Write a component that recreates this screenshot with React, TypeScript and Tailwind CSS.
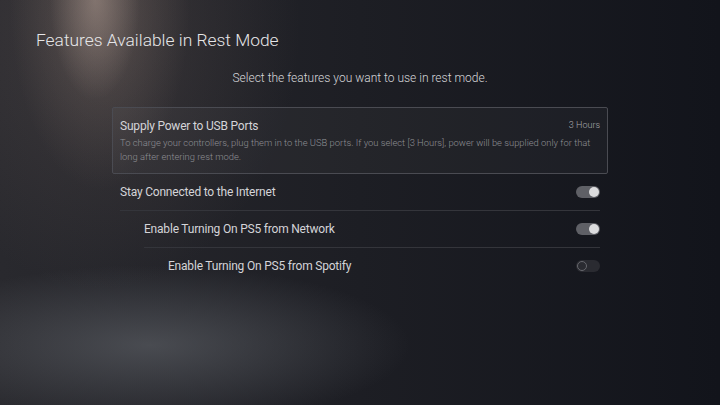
import React from "react";

function Toggle({ on }: { on: boolean }) {
  return on ? (
    <div className="w-[24px] h-[12px] rounded-full bg-[#5f6066] flex items-center justify-end pr-[1px]">
      <div className="w-[10px] h-[10px] rounded-full bg-[#dcdcde]" />
    </div>
  ) : (
    <div className="w-[24px] h-[12px] rounded-full bg-[#2a2b31] flex items-center pl-[1px]">
      <div className="w-[10px] h-[10px] rounded-full border border-[#66676d]" />
    </div>
  );
}

function Row({ label, indent, divider, on }: { label: string; indent: string; divider: boolean; on: boolean }) {
  return (
    <div className={`${indent} ${divider ? "border-b border-[#34353b]" : ""}`}>
      <div className="h-[36px] flex items-center justify-between">
        <span className="text-[12px] tracking-[-0.2px] text-[#d4d4d8]">{label}</span>
        <Toggle on={on} />
      </div>
    </div>
  );
}

export default function App() {
  return (
    <div
      className="w-[720px] h-[405px] overflow-hidden flex flex-col text-white bg-[image:radial-gradient(ellipse_45px_100px_at_95px_0px,rgba(180,160,150,0.45),transparent),radial-gradient(ellipse_90px_190px_at_100px_0px,rgba(150,130,120,0.35),transparent),radial-gradient(ellipse_200px_260px_at_100px_30px,rgba(110,96,92,0.3),transparent),radial-gradient(ellipse_260px_80px_at_150px_345px,rgba(110,114,120,0.5),transparent),linear-gradient(to_right,#29292e,#1d1e24_50%,#12141b)]"
      style={{ fontFamily: "Roboto, 'Liberation Sans', sans-serif" }}
    >
      <div className="pl-[36px] pt-[28px] text-[17.4px] leading-[24px] font-light text-[#e6e6e8]">
        Features Available in Rest Mode
      </div>
      <div className="mt-[18px] text-center text-[12px] leading-[16px] font-light text-[#d6d6d9]">
        Select the features you want to use in rest mode.
      </div>
      <div className="mt-[21px] ml-[112px] w-[496px] border border-[#4a4b52] rounded-[2px] bg-[#ffffff08] px-[7px] pt-[10px] pb-[9px]">
        <div className="flex justify-between items-center h-[16px]">
          <span className="text-[12px] tracking-[-0.2px] text-[#d4d4d8]">Supply Power to USB Ports</span>
          <span className="text-[9px] font-light text-[#a8a9ad]">3 Hours</span>
        </div>
        <div className="mt-[2px] text-[9.4px] leading-[14px] text-[#8e8f94] font-light">
          To charge your controllers, plug them in to the USB ports. If you select [3 Hours], power will be supplied only for that long after entering rest mode.
        </div>
      </div>
      <div className="ml-[120px] w-[480px] flex flex-col">
        <Row label="Stay Connected to the Internet" indent="" divider on />
        <Row label="Enable Turning On PS5 from Network" indent="ml-[24px]" divider on />
        <Row label="Enable Turning On PS5 from Spotify" indent="ml-[48px]" divider={false} on={false} />
      </div>
    </div>
  );
}
